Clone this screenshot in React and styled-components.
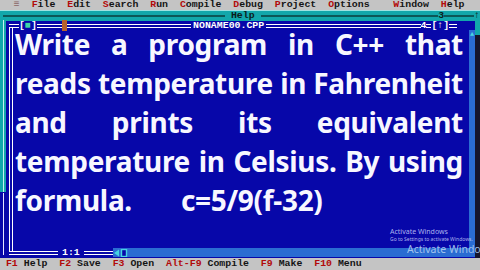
import React from "react";
import styled, { createGlobalStyle } from "styled-components";

const GlobalStyle = createGlobalStyle`
  html, body {
    margin: 0;
    padding: 0;
    background: #000;
  }
  body {
    width: 480px;
    height: 270px;
    overflow: hidden;
  }
`;

const Screen = styled.div`
  position: relative;
  width: 480px;
  height: 270px;
  display: flex;
  flex-direction: column;
  overflow: hidden;
  font-family: "Liberation Mono", "DejaVu Sans Mono", monospace;
  font-weight: 700;
  font-size: 9.9px;
`;

const MenuBar = styled.div`
  height: 10px;
  line-height: 10px;
  padding-left: 2px;
  background: #c4c4c4;
  color: #141414;
  white-space: pre;
`;

const Hot = styled.span`
  color: #b20a0a;
`;

const SysMenu = styled.span`
  color: #8a6464;
`;

const Desktop = styled.div`
  position: relative;
  flex: 1;
  background: #0707a9;
`;

/* help window sits behind the editor */
const HelpWindow = styled.div`
  position: absolute;
  left: 0;
  top: 0;
  right: 0;
  height: 182px;
  display: flex;
  flex-direction: column;
  padding-left: 3px;
  box-sizing: border-box;
  background: #12a7ab;
  border-top: 1px solid #9fe2e2;
`;

const HelpTitle = styled.div`
  display: flex;
  align-items: center;
  height: 9px;
  line-height: 9px;
  color: #0b1c1c;
  white-space: pre;
`;

const HelpLine = styled.div`
  flex: ${(p) => (p.$w ? `0 0 ${p.$w}px` : `${p.$grow || 1} 1 0`)};
  height: 2px;
  background: #0c5758;
`;

const HelpBody = styled.div`
  flex: 1;
  border-left: 1px solid #c4f0f0;
`;

const BackLine = styled.div`
  position: absolute;
  left: 3px;
  top: 183px;
  height: 62px;
  border-left: 1px solid #e6e6ff;
`;

const EditorWindow = styled.div`
  position: absolute;
  left: 6px;
  top: 11px;
  width: 469px;
  height: 237px;
  display: flex;
  flex-direction: column;
  background: #0707a9;
  color: #ffffff;
`;

const FrameRow = styled.div`
  display: flex;
  align-items: flex-start;
  height: ${(p) => p.$h}px;
  line-height: ${(p) => p.$h}px;
  padding-left: 3px;
  white-space: pre;
`;

const DLine = styled.div`
  flex: ${(p) => (p.$w ? `0 0 ${p.$w}px` : 1)};
  height: 4px;
  margin-top: 3px;
  box-sizing: border-box;
  border-top: 1px solid #ffffff;
  border-bottom: 1px solid #ffffff;
`;

const FrameText = styled.span`
  padding: 0 ${(p) => p.$pad || 0}px;
`;

const CloseMark = styled.span`
  color: #3fd6a6;
`;

const MouseCursor = styled.div`
  position: absolute;
  left: 56px;
  top: -1px;
  width: 5px;
  height: 11px;
  background: #b7612d;
`;

const Body = styled.div`
  flex: 1;
  display: flex;
  min-height: 0;
`;

const LeftBorder = styled.div`
  width: 4px;
  margin: -3px 0 -3px 3px;
  box-sizing: border-box;
  border-left: 1px solid #ffffff;
  border-right: 1px solid #ffffff;
`;

const Content = styled.div`
  flex: 1;
  padding: 0 6px 0 2px;
`;

const TextBlock = styled.div`
  margin-top: -5px;
  font-family: "Noto Sans", "Open Sans", sans-serif;
  font-weight: 700;
  font-size: 28px;
  line-height: 39px;
  letter-spacing: -0.3px;
  color: #f7f7ff;
`;

const TextLine = styled.div`
  display: flex;
  justify-content: ${(p) => (p.$spread ? "space-between" : "flex-start")};
  column-gap: ${(p) => p.$gap || 6}px;
  white-space: nowrap;
`;

const VScroll = styled.div`
  width: 6px;
  display: flex;
  flex-direction: column;
  align-items: center;
  background: #2a6cd2;
  color: #47d6e0;
  font-size: 7px;
  line-height: 9px;
`;

const HScroll = styled.div`
  flex: 1;
  height: 9px;
  display: flex;
  align-items: center;
  background: #2a6cd2;
`;

const StatusBar = styled.div`
  height: 12px;
  line-height: 12px;
  background: #c4c4c4;
  color: #141414;
  white-space: pre;
`;

const EdgeShade = styled.div`
  position: absolute;
  right: 0;
  top: 35px;
  width: 5px;
  height: 223px;
  background: #15152c;
`;

const Watermark = styled.div`
  position: absolute;
  left: 390px;
  top: 228px;
  font-family: "Noto Sans", "Open Sans", sans-serif;
  font-weight: 400;
  color: rgba(214, 222, 255, 0.8);
  white-space: nowrap;
`;

const WmLine = styled.div`
  font-size: ${(p) => p.$size}px;
  line-height: ${(p) => p.$lh}px;
  margin-left: ${(p) => p.$indent || 0}px;
  color: ${(p) => p.$color || "inherit"};
`;

const menuItems = ["File", "Edit", "Search", "Run", "Compile", "Debug", "Project", "Options"];

const keys = [
  ["F1", "Help"],
  ["F2", "Save"],
  ["F3", "Open"],
  ["Alt-F9", "Compile"],
  ["F9", "Make"],
  ["F10", "Menu"],
];

const lines = [
  { words: ["Write", "a", "program", "in", "C++", "that"], spread: true },
  { words: ["reads", "temperature", "in", "Fahrenheit"], spread: true },
  { words: ["and", "prints", "its", "equivalent"], spread: true },
  { words: ["temperature", "in", "Celsius.", "By", "using"], spread: true },
  { words: ["formula.", "c=5/9(f-32)"], gap: 49 },
];

function MenuItem({ label }) {
  return (
    <>
      <Hot>{label[0]}</Hot>
      {label.slice(1)}
    </>
  );
}

function ScrollArrows() {
  return (
    <svg width="14" height="8" viewBox="0 0 14 8" style={{ marginLeft: 1 }}>
      <path d="M0 4 L5 0.5 L5 7.5 Z" fill="#45d4e2" />
      <rect x="7.5" y="0.5" width="5" height="7" fill="#0707a9" stroke="#45d4e2" strokeWidth="1.4" />
    </svg>
  );
}

export default function App() {
  return (
    <Screen>
      <GlobalStyle />
      <MenuBar>
        {"  "}
        <SysMenu>≡</SysMenu>
        {"  "}
        {menuItems.map((m) => (
          <React.Fragment key={m}>
            <MenuItem label={m} />
            {"  "}
          </React.Fragment>
        ))}
        {"  "}
        <MenuItem label="Window" />
        {"  "}
        <MenuItem label="Help" />
      </MenuBar>

      <Desktop>
        <HelpWindow>
          <HelpTitle>
            <HelpLine $grow={5} />
            {" Help "}
            <HelpLine $grow={4} />
            {"3"}
            <HelpLine $w={30} />
            {"↑"}
          </HelpTitle>
          <HelpBody />
        </HelpWindow>
        <BackLine />

        <EditorWindow>
          <MouseCursor />
          <FrameRow $h={9}>
            <DLine $w={10} />
            <FrameText>
              [<CloseMark>■</CloseMark>]
            </FrameText>
            <DLine />
            <FrameText $pad={2}>NONAME00.CPP</FrameText>
            <DLine />
            <FrameText>4</FrameText>
            <DLine $w={5} />
            <FrameText>[↑]</FrameText>
            <DLine $w={8} />
            <FrameText>{"   "}</FrameText>
          </FrameRow>

          <Body>
            <LeftBorder />
            <Content>
              <TextBlock>
                {lines.map((l, i) => (
                  <TextLine key={i} $spread={l.spread} $gap={l.gap}>
                    {l.words.map((w, j) => (
                      <span key={j}>{w}</span>
                    ))}
                  </TextLine>
                ))}
              </TextBlock>
            </Content>
            <VScroll>▲</VScroll>
          </Body>

          <FrameRow $h={10}>
            <DLine $w={49} />
            <FrameText $pad={4}>1:1</FrameText>
            <DLine $w={29} />
            <HScroll>
              <ScrollArrows />
            </HScroll>
          </FrameRow>
        </EditorWindow>
      </Desktop>

      <StatusBar>
        {" "}
        {keys.map(([k, label], i) => (
          <React.Fragment key={k}>
            <Hot>{k}</Hot>
            {" " + label}
            {i < keys.length - 1 ? "  " : ""}
          </React.Fragment>
        ))}
      </StatusBar>

      <EdgeShade />
      <Watermark>
        <WmLine $size={7} $lh={8}>Activate Windows</WmLine>
        <WmLine $size={5} $lh={7}>Go to Settings to activate Windows.</WmLine>
        <WmLine $size={10.5} $lh={13} $indent={17} $color="rgba(170, 202, 240, 0.95)">
          Activate Windows
        </WmLine>
      </Watermark>
    </Screen>
  );
}
